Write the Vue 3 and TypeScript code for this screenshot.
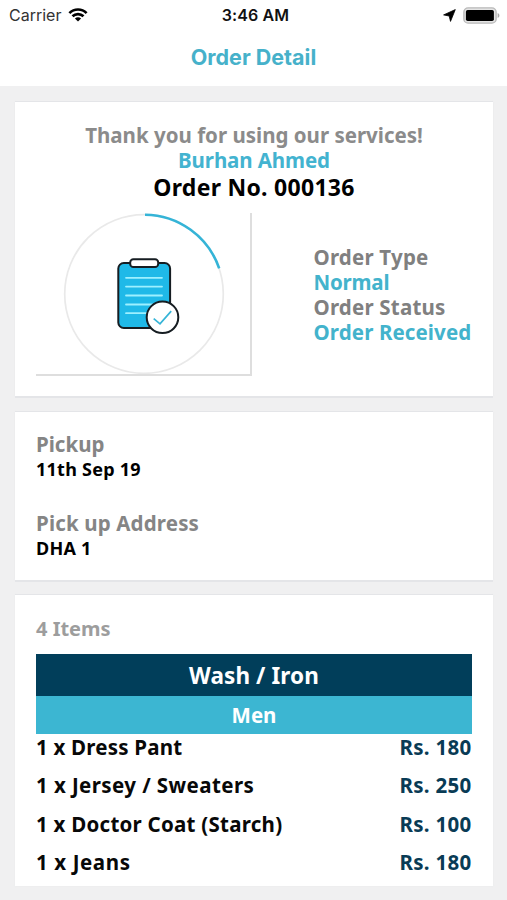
<script setup lang="ts">
interface OrderItem {
  label: string
  price: string
  size: string
}

const items: OrderItem[] = [
  { label: '1 x Dress Pant', price: 'Rs. 180', size: 'dress' },
  { label: '1 x Jersey / Sweaters', price: 'Rs. 250', size: 'jersey' },
  { label: '1 x Doctor Coat (Starch)', price: 'Rs. 100', size: 'coat' },
  { label: '1 x Jeans', price: 'Rs. 180', size: 'jeans' },
]
</script>

<template>
  <div class="screen">
    <header class="top">
      <div class="status">
        <div class="side">
          <span class="carrier">Carrier</span>
          <svg class="wifi" width="20" height="14" viewBox="0 0 20 14">
            <g fill="none" stroke="#000" stroke-width="2.7">
              <path d="M1.4 5.1C6.2.3 13.8.3 18.6 5.1" />
              <path d="M4.5 8.3C7.6 5.3 12.4 5.3 15.5 8.3" />
            </g>
            <path d="M10 13.6L6.9 10.5C8.6 8.9 11.4 8.9 13.1 10.5Z" fill="#000" />
          </svg>
        </div>
        <span class="time">3:46 AM</span>
        <div class="side right">
          <svg width="13" height="13" viewBox="0 0 13 13">
            <path d="M12.3.6L7.5 12.4L6.2 7L.6 5.9Z" fill="#000" stroke="#000" stroke-width=".8" stroke-linejoin="round" />
          </svg>
          <svg class="battery" width="37" height="17" viewBox="0 0 37 17">
            <rect x=".9" y=".9" width="32.2" height="15.2" rx="4.2" fill="#e4e4e4" stroke="#b8b8b8" stroke-width="1.4" />
            <rect x="2.9" y="3" width="28" height="11" rx="1.8" fill="#000" />
            <path d="M34.6 6C37 6.8 37 10.2 34.6 11Z" fill="#aaa" />
          </svg>
        </div>
      </div>
      <h1 class="title">Order Detail</h1>
    </header>

    <main class="content">
      <section class="card summary">
        <p class="thanks">Thank you for using our services!</p>
        <p class="customer">Burhan Ahmed</p>
        <p class="number">Order No. 000136</p>
        <div class="overview">
          <div class="progress">
            <svg width="162" height="161" viewBox="0 0 162 161">
              <circle cx="81" cy="81" r="79.3" fill="none" stroke="#e9e9e9" stroke-width="1.7" />
              <path d="M82 1.7A79.3 79.3 0 0 1 156.2 55.4" fill="none" stroke="#35b4d7" stroke-width="2.6" />
              <rect x="55.3" y="50" width="51.8" height="65" rx="5.5" fill="#1fb9e8" stroke="#161d22" stroke-width="2" />
              <rect x="67.2" y="46.3" width="28" height="7.8" rx="3.2" fill="#fff" stroke="#161d22" stroke-width="2" />
              <path d="M63 64.8H99M63 73.6H99M63 82.5H99M63 91.5H99M63 100.2H85" stroke="#9df0ff" stroke-width="1.8" stroke-linecap="round" />
              <circle cx="99.5" cy="104.3" r="15.8" fill="#fff" stroke="#161d22" stroke-width="2" />
              <path d="M90.7 105.7L97 110.8L108.2 98.1" fill="none" stroke="#35b4d7" stroke-width="1.7" />
            </svg>
          </div>
          <dl class="facts">
            <dt class="type">Order Type</dt>
            <dd class="normal">Normal</dd>
            <dt class="state">Order Status</dt>
            <dd class="received">Order Received</dd>
          </dl>
        </div>
      </section>

      <section class="card pickup">
        <div class="field">
          <h2 class="pickup-label">Pickup</h2>
          <p class="date">11th Sep 19</p>
        </div>
        <div class="field">
          <h2 class="address-label">Pick up Address</h2>
          <p class="address">DHA 1</p>
        </div>
      </section>

      <section class="card order">
        <h2 class="count">4 Items</h2>
        <div class="service"><span>Wash / Iron</span></div>
        <div class="group"><span>Men</span></div>
        <ul class="items">
          <li v-for="item in items" :key="item.label">
            <span :class="item.size">{{ item.label }}</span>
            <span class="price">{{ item.price }}</span>
          </li>
        </ul>
      </section>
    </main>
  </div>
</template>

<style>
body {
  margin: 0;
  background: #f0f0f1;
}
</style>

<style scoped>
.screen {
  box-sizing: border-box;
  width: 507px;
  height: 900px;
  overflow: hidden;
  background: #f0f0f1;
  font-family: "Noto Sans", sans-serif;
  font-weight: 700;
}
p, h1, h2, dl, dd, ul {
  margin: 0;
  padding: 0;
  white-space: nowrap;
}
.top {
  height: 86px;
  background: #fff;
  font-family: Inter, sans-serif;
}
.status {
  display: flex;
  align-items: center;
  height: 30px;
  padding: 0 7px 0 9px;
}
.side {
  display: flex;
  flex: 1;
  align-items: center;
  gap: 7px;
}
.right {
  justify-content: flex-end;
  gap: 7px;
}
.carrier {
  color: #333;
  font-size: 16px;
  font-weight: 400;
}
.time {
  position: relative;
  left: 1px;
  color: #111;
  font-size: 16px;
  font-weight: 600;
  letter-spacing: 0.1px;
}
.title {
  padding-top: 13px;
  color: #46b1ca;
  font-size: 21.5px;
  font-weight: 700;
  line-height: 28px;
  text-align: center;
}
.content {
  display: flex;
  flex-direction: column;
  padding: 16px 14px 0 15px;
}
.card {
  box-sizing: border-box;
  padding: 0 21px;
  background: #fff;
  box-shadow: 0 -1.5px 0.5px #e4e5e8, 0 1.5px 0.5px #e4e5e8, 0 0 2px #e6e7ea;
}
.summary {
  height: 294px;
  padding-top: 20.5px;
  text-align: center;
}
.thanks, .customer {
  color: #8b8b8b;
  font-size: 20.5px;
  line-height: 25px;
}
.customer {
  color: #43b3d0;
  letter-spacing: -0.1px;
}
.number {
  color: #000;
  font-size: 23px;
  letter-spacing: 0.28px;
  line-height: 29px;
}
.overview {
  display: flex;
  margin-top: 11.5px;
  text-align: left;
}
.progress {
  box-sizing: border-box;
  flex: none;
  width: 216px;
  height: 163px;
  padding-left: 27px;
  border-right: 2px solid #dedede;
  border-bottom: 2px solid #dedede;
}
.progress svg {
  display: block;
}
.facts {
  width: 158px;
  padding: 32px 0 0 61.5px;
  color: #808080;
  font-size: 20.5px;
  letter-spacing: 0.2px;
  line-height: 25px;
}
.facts dd {
  color: #43b3cc;
}
.facts .normal {
  letter-spacing: -0.2px;
}
.facts .received {
  letter-spacing: 0.12px;
}
.pickup {
  display: grid;
  align-content: start;
  gap: 30px;
  height: 168px;
  margin-top: 16px;
  padding-top: 19px;
}
.pickup h2, .count {
  color: #858585;
  font-size: 20.5px;
  line-height: 27px;
}
.pickup .address-label {
  letter-spacing: 0.15px;
}
.pickup p {
  color: #000;
  font-size: 18px;
  letter-spacing: 0.25px;
  line-height: 22px;
}
.order {
  height: 291px;
  margin-top: 15px;
  padding-top: 20px;
  box-shadow: 0 -1.5px 0.5px #e4e5e8, 0 0 2px #e9eaec;
}
.order .count {
  color: #9d9d9d;
  font-size: 20px;
}
.service {
  height: 42px;
  margin-top: 12px;
  background: #013e5a;
  color: #fff;
  font-size: 22.5px;
  letter-spacing: 0.1px;
  line-height: 43px;
  text-align: center;
}
.group {
  height: 38px;
  background: #3cb6d2;
  color: #fff;
  font-size: 20.5px;
  line-height: 38px;
  text-align: center;
}
.items {
  list-style: none;
}
.items li {
  display: flex;
  justify-content: space-between;
  height: 38.4px;
  color: #080808;
  font-size: 20.5px;
  line-height: 26px;
}
.dress {
  letter-spacing: 0.22px;
}
.jersey {
  letter-spacing: 0.42px;
}
.coat {
  letter-spacing: 0.25px;
}
.jeans {
  letter-spacing: 0.6px;
}
.items .price {
  margin-right: 0.5px;
  color: #093b55;
  letter-spacing: 0.3px;
}
</style>
